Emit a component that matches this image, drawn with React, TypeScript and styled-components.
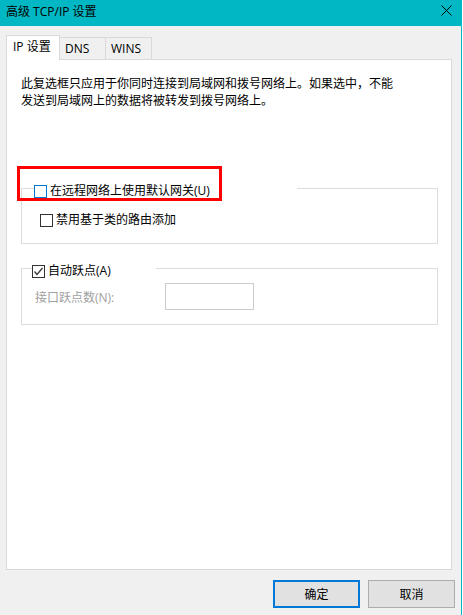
import React from 'react';
import styled, { createGlobalStyle } from 'styled-components';

const GlobalStyle = createGlobalStyle`
  html, body { margin: 0; padding: 0; background: #ffffff; }
  body {
    font-family: "Open Sans", "Noto Sans CJK SC", sans-serif;
    font-size: 12px;
    color: #000000;
  }
  * { box-sizing: border-box; }
`;

const Window = styled.div`
  width: 462px;
  height: 615px;
  display: flex;
  flex-direction: column;
  background: #f0f0f0;
  border-right: 1px solid #00b7c3;
`;

const TitleBar = styled.div`
  flex: none;
  height: 26px;
  background: #00b7c3;
  display: flex;
  justify-content: space-between;
  align-items: flex-start;
  padding: 0 9px 0 6px;
`;

const Title = styled.span`
  font-size: 12px;
  line-height: 24px;
`;

const CloseButton = styled.button`
  border: 0;
  background: none;
  padding: 0;
  margin-top: 5px;
  width: 11px;
  height: 11px;
  display: flex;
`;

const Body = styled.div`
  flex: 1;
  display: flex;
  flex-direction: column;
  padding: 9px 0 0 6px;
  min-height: 0;
`;

const TabStrip = styled.div`
  flex: none;
  height: 24px;
  display: flex;
  align-items: flex-end;
`;

const Tab = styled.div<{ $active?: boolean; $w: number }>`
  width: ${(p) => p.$w}px;
  height: ${(p) => (p.$active ? 25 : 22)}px;
  margin-bottom: ${(p) => (p.$active ? -1 : 0)}px;
  margin-left: ${(p) => (p.$active ? 0 : -1)}px;
  padding: 0 ${(p) => (p.$active ? 6 : 5)}px;
  line-height: ${(p) => (p.$active ? 22 : 21)}px;
  background: ${(p) => (p.$active ? '#ffffff' : '#f0f0f0')};
  border: 1px solid #d9d9d9;
  border-bottom: none;
  white-space: nowrap;
  position: ${(p) => (p.$active ? 'relative' : 'static')};
  z-index: ${(p) => (p.$active ? 1 : 'auto')};
  &:first-child { margin-left: 0; }
`;

const Panel = styled.div`
  flex: 1;
  width: 446px;
  background: #ffffff;
  border: 1px solid #d9d9d9;
  padding: 15px 13px 0 14px;
  display: flex;
  flex-direction: column;
`;

const Description = styled.p`
  margin: 0;
  line-height: 17px;
  white-space: nowrap;
`;

const GroupBox = styled.fieldset<{ $mt: number }>`
  margin: ${(p) => p.$mt}px 0 0;
  padding: 0;
  min-width: 0;
  border: 1px solid #dcdcdc;
`;

const Legend = styled.legend<{ $ml: number; $w: number }>`
  margin-left: ${(p) => p.$ml}px;
  width: ${(p) => p.$w}px;
  padding: 6px 0 0;
  position: relative;
`;

const Highlight = styled.div`
  position: absolute;
  left: -17px;
  top: -12px;
  width: 205px;
  height: 35px;
  border: 3px solid #ff0000;
  pointer-events: none;
`;

const GroupContent = styled.div<{ $pad: string }>`
  padding: ${(p) => p.$pad};
`;

const CheckRow = styled.label<{ $disabled?: boolean }>`
  display: flex;
  align-items: center;
  gap: 3px;
  height: 14px;
  line-height: 14px;
  white-space: nowrap;
  color: ${(p) => (p.$disabled ? '#a0a0a0' : '#000000')};
`;

const Box = styled.span<{ $focus?: boolean }>`
  flex: none;
  width: 13px;
  height: 13px;
  border: 1px solid ${(p) => (p.$focus ? '#0078d7' : '#333333')};
  background: #ffffff;
  display: flex;
  align-items: center;
  justify-content: center;
`;

const FieldRow = styled.div`
  display: flex;
  align-items: center;
`;

const FieldLabel = styled.span`
  width: 130px;
  color: #a0a0a0;
  white-space: nowrap;
`;

const TextInput = styled.input`
  width: 89px;
  height: 27px;
  margin: 0;
  border: 1px solid #cccccc;
  background: #ffffff;
  font: inherit;
  padding: 0 4px;
`;

const Footer = styled.div`
  flex: none;
  display: flex;
  justify-content: flex-end;
  gap: 8px;
  padding: 10px 6px 7px;
`;

const Button = styled.button<{ $primary?: boolean }>`
  width: 87px;
  height: 28px;
  margin: 0;
  padding: 0;
  background: #e1e1e1;
  border: ${(p) => (p.$primary ? '2px solid #0078d7' : '1px solid #adadad')};
  font: inherit;
  font-size: 12px;
  color: #000000;
`;

function CheckBox({ checked, focus }: { checked?: boolean; focus?: boolean }) {
  return (
    <Box $focus={focus}>
      {checked && (
        <svg width="11" height="11" viewBox="0 0 11 11">
          <polyline points="1.5,5.5 4,8.5 9.5,2" fill="none" stroke="#333333" strokeWidth="1.2" />
        </svg>
      )}
    </Box>
  );
}

export default function App() {
  return (
    <>
      <GlobalStyle />
      <Window>
        <TitleBar>
          <Title>高级 TCP/IP 设置</Title>
          <CloseButton aria-label="关闭">
            <svg width="11" height="11" viewBox="0 0 11 11">
              <line x1="0.5" y1="0.5" x2="10.5" y2="10.5" stroke="#000" strokeWidth="1" />
              <line x1="10.5" y1="0.5" x2="0.5" y2="10.5" stroke="#000" strokeWidth="1" />
            </svg>
          </CloseButton>
        </TitleBar>
        <Body>
          <TabStrip>
            <Tab $active $w={54}>IP 设置</Tab>
            <Tab $w={47}>DNS</Tab>
            <Tab $w={47}>WINS</Tab>
          </TabStrip>
          <Panel>
            <Description>
              此复选框只应用于你同时连接到局域网和拨号网络上。如果选中，不能
              <br />
              发送到局域网上的数据将被转发到拨号网络上。
            </Description>
            <GroupBox $mt={69}>
              <Legend $ml={12} $w={263}>
                <CheckRow>
                  <CheckBox focus />
                  在远程网络上使用默认网关(U)
                </CheckRow>
                <Highlight />
              </Legend>
              <GroupContent $pad="15px 0 16px 18px">
                <CheckRow>
                  <CheckBox />
                  禁用基于类的路由添加
                </CheckRow>
              </GroupContent>
            </GroupBox>
            <GroupBox $mt={14}>
              <Legend $ml={10} $w={124}>
                <CheckRow>
                  <CheckBox checked />
                  自动跃点(A)
                </CheckRow>
              </Legend>
              <GroupContent $pad="5px 0 14px 13px">
                <FieldRow>
                  <FieldLabel>接口跃点数(N):</FieldLabel>
                  <TextInput disabled />
                </FieldRow>
              </GroupContent>
            </GroupBox>
          </Panel>
        </Body>
        <Footer>
          <Button $primary>确定</Button>
          <Button>取消</Button>
        </Footer>
      </Window>
    </>
  );
}
